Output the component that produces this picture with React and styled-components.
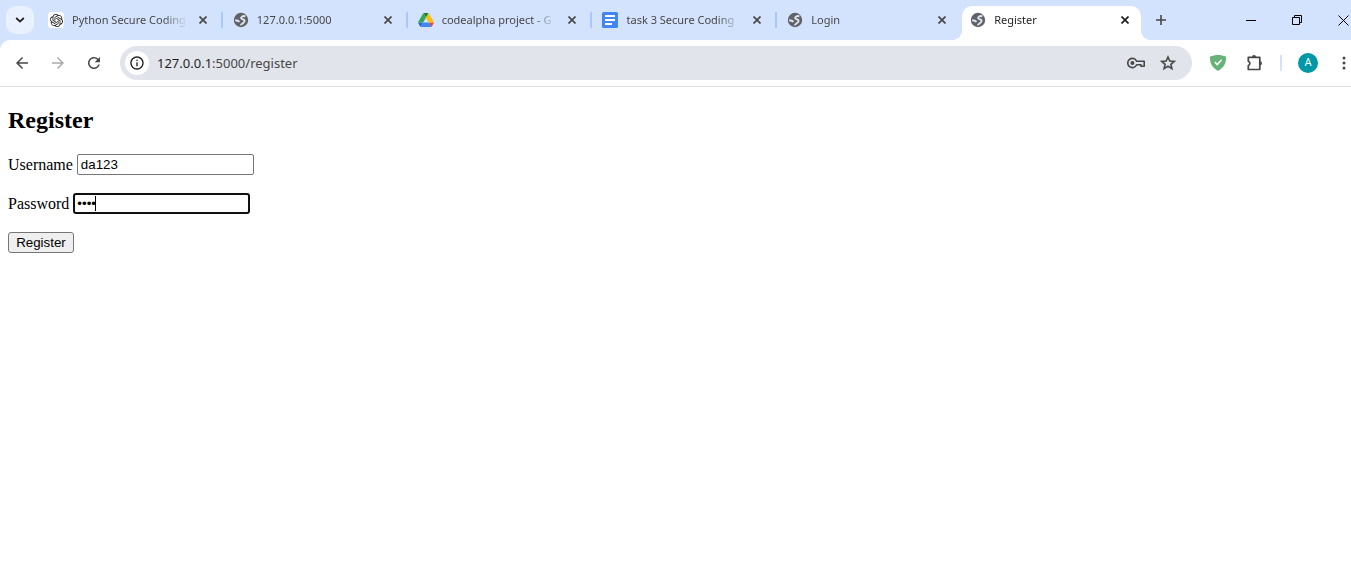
import React from "react";
import styled, { createGlobalStyle, css } from "styled-components";
import {
  MdArrowBack,
  MdArrowForward,
  MdRefresh,
  MdInfoOutline,
} from "react-icons/md";
import { SiOpenai } from "react-icons/si";

const GlobalStyle = createGlobalStyle`
  *, *::before, *::after { box-sizing: border-box; }
  body { margin: 0; background: #fff; overflow-x: hidden; }
`;

const uiFont = `"Noto Sans", "Open Sans", sans-serif`;

const Browser = styled.div`
  min-height: 100vh;
  display: flex;
  flex-direction: column;
`;

const PlainButton = styled.button`
  display: flex;
  align-items: center;
  justify-content: center;
  flex: none;
  padding: 0;
  border: 0;
  background: none;
  color: #474747;

  svg { flex: none; }
`;

const TabStrip = styled.header`
  display: flex;
  align-items: flex-end;
  height: 40px;
  padding-left: 6px;
  background: #d3e2fd;
`;

const TabSearch = styled(PlainButton)`
  align-self: center;
  width: 28px;
  height: 28px;
  margin-right: 4px;
  border-radius: 10px;
  background: #e9f1fe;
  color: #1f1f1f;
`;

const TabList = styled.div`
  display: flex;
  flex: 0 1 1110px;
  min-width: 0;
`;

const Tab = styled.div`
  position: relative;
  display: flex;
  flex: 1 1 0;
  min-width: 0;
  align-items: center;
  height: 34px;
  padding: 0 12px 6px 10px;
  color: #474747;

  ${(p) =>
    p.$divided &&
    css`
      &::after {
        content: "";
        position: absolute;
        right: 0;
        top: 6px;
        width: 2px;
        height: 16px;
        background: #a8c7fa;
      }
    `}

  ${(p) =>
    p.$active &&
    css`
      margin-right: 7px;
      padding: 0 8px 6px;
      border-radius: 10px 10px 0 0;
      background: #fff;
      color: #1f1f1f;

      &::before,
      &::after {
        content: "";
        position: absolute;
        bottom: 0;
        width: 10px;
        height: 10px;
      }
      &::before {
        right: 100%;
        background: radial-gradient(circle at 0 0, transparent 10px, #fff 10px);
      }
      &::after {
        left: 100%;
        background: radial-gradient(circle at 100% 0, transparent 10px, #fff 10px);
      }
    `}
`;

const Favicon = styled.span`
  display: flex;
  align-items: center;
  justify-content: center;
  flex: none;
  width: 16px;
  height: 16px;
  margin-right: 8px;
  border-radius: 3px;
  color: #5f6368;
  background: ${(p) => (p.$plate ? "#fff" : "none")};
`;

const TabTitle = styled.span`
  flex: 1;
  min-width: 0;
  overflow: hidden;
  white-space: nowrap;
  font: 11px/16px ${uiFont};
  mask-image: linear-gradient(to right, #000 calc(100% - 24px), transparent);
`;

const TabClose = styled(PlainButton)`
  width: 16px;
  height: 16px;
  margin-left: 8px;
  color: inherit;
`;

const NewTab = styled(PlainButton)`
  align-self: center;
  width: 26px;
  height: 28px;
`;

const WindowControls = styled.div`
  display: flex;
  align-self: stretch;
  margin-left: auto;
`;

const WindowButton = styled(PlainButton)`
  width: ${(p) => (p.$edge ? 31 : 46)}px;
  padding-right: ${(p) => (p.$edge ? 2 : 0)}px;
  justify-content: ${(p) => (p.$edge ? "flex-end" : "center")};
  color: #000;
`;

const Toolbar = styled.nav`
  display: flex;
  align-items: center;
  height: 47px;
  padding-left: 8px;
  border-bottom: 1px solid #dfe1e3;
  background: linear-gradient(#d3e2fd, #d3e2fd) 0 0 / 10px 10px no-repeat;
  position: relative;
  isolation: isolate;

  &::before {
    content: "";
    position: absolute;
    inset: 0;
    z-index: -1;
    border-top-left-radius: 10px;
    background: #fff;
  }
`;

const ToolButton = styled(PlainButton)`
  width: 28px;
  height: 28px;
  margin-right: 8px;
  font-size: 18px;
  color: ${(p) => (p.disabled ? "#ababab" : "#474747")};
`;

const AddressBar = styled.div`
  display: flex;
  align-items: center;
  flex: 1;
  min-width: 0;
  height: 34px;
  margin: 0 12px 0 4px;
  padding: 0 10px 0 5px;
  border-radius: 17px;
  background: #e1e5eb;
`;

const SiteInfo = styled(PlainButton)`
  width: 24px;
  height: 24px;
  border-radius: 50%;
  background: #fff;
  font-size: 16px;
  color: #1f1f1f;
`;

const Url = styled.span`
  flex: 1;
  min-width: 0;
  margin-left: 8px;
  overflow: hidden;
  white-space: nowrap;
  font: 13px/20px ${uiFont};
  color: #474747;
`;

const Host = styled.span`
  color: #1f1f1f;
`;

const AddressAction = styled(PlainButton)`
  width: 28px;
  height: 28px;
  margin-left: 4px;
`;

const Extensions = styled.div`
  display: flex;
  align-items: center;
  gap: 9px;
`;

const ExtensionButton = styled(PlainButton)`
  width: 28px;
  height: 28px;
`;

const ToolDivider = styled.span`
  width: 2px;
  height: 16px;
  margin-left: 2px;
  background: #d3e2fd;
`;

const Avatar = styled.button`
  width: 20px;
  height: 20px;
  margin-left: 7px;
  padding: 0;
  border: 0;
  border-radius: 50%;
  background: #0097a7;
  color: #fff;
  font: 11px/20px Roboto, sans-serif;
  text-align: center;
`;

const MenuButton = styled(PlainButton)`
  width: 14px;
  height: 28px;
  margin-left: 10px;
`;

const Page = styled.main`
  flex: 1;
  padding: 20px 8px 8px;
  color: #000;
  font: 16px/18px "Liberation Serif", "Times New Roman", serif;
`;

const Heading = styled.h2`
  margin: 0 0 20px;
  font-size: 24px;
  line-height: 27px;
`;

const Form = styled.form`
  display: flex;
  flex-direction: column;
  align-items: flex-start;
  gap: 18px;
`;

const Field = styled.div`
  display: flex;
  align-items: center;
  gap: 4px;
`;

const FieldBox = styled.span`
  position: relative;
  display: flex;
`;

const TextInput = styled.input`
  width: 177px;
  height: 21px;
  padding: 1px 3px;
  border: 1px solid #767676;
  border-radius: 2px;
  outline: 0;
  background: #fff;
  color: #000;
  font-family: "Liberation Sans", Arial, sans-serif;

  ${(p) =>
    p.$focused &&
    css`
      padding: 0 2px;
      border: 2px solid #101010;
      border-radius: 3px;
    `}
`;

const Caret = styled.span`
  position: absolute;
  left: 22px;
  top: 3px;
  width: 1px;
  height: 15px;
  background: #000;
`;

const SubmitButton = styled.button`
  width: 66px;
  height: 21px;
  padding: 0;
  border: 1px solid #767676;
  border-radius: 3px;
  background: #efefef;
  color: #000;
  font-family: "Liberation Sans", Arial, sans-serif;
`;

const CloseIcon = () => (
  <svg width="8" height="8" viewBox="0 0 8 8" stroke="currentColor" strokeWidth="1.7">
    <path d="M.5.5l7 7M7.5.5l-7 7" />
  </svg>
);

const GlobeIcon = () => (
  <svg width="16" height="16" viewBox="0 0 16 16">
    <circle cx="8" cy="8" r="7.2" fill="currentColor" />
    <path
      d="M12.4 4.300C10.800 3.600 9.300 4 8.400 5.200c-.6.900-.1 1.700.9 1.900 1.300.2 2.300.8 2.300 2 0 1.200-1.100 1.500-1.800 2.100-.7.700-1.100 1.600-2.500 1.700M2.200 8.200c1.500.1 3.100.3 4.300 1.600"
      fill="none"
      stroke="#dfe5ef"
      strokeWidth="1.9"
    />
  </svg>
);

const DriveIcon = () => (
  <svg width="16" height="14" viewBox="0 0 87.3 78">
    <path d="m6.6 66.85 3.85 6.65c.8 1.4 1.95 2.5 3.3 3.3l13.75-23.8h-27.5c0 1.55.4 3.1 1.2 4.5z" fill="#1967d2" />
    <path d="m43.65 25-13.75-23.8c-1.35.8-2.5 1.9-3.3 3.3l-25.4 44a9.06 9.06 0 0 0 -1.2 4.5h27.5z" fill="#34a853" />
    <path d="m73.55 76.8c1.35-.8 2.5-1.9 3.3-3.3l1.6-2.75 7.65-13.25c.8-1.4 1.2-2.95 1.2-4.5h-27.5l5.85 11.5z" fill="#ea4335" />
    <path d="m43.65 25 13.75-23.8c-1.35-.8-2.9-1.2-4.5-1.2h-18.5c-1.6 0-3.15.45-4.5 1.2z" fill="#188038" />
    <path d="m59.8 53h-32.3l-13.75 23.8c1.35.8 2.9 1.2 4.5 1.2h50.8c1.6 0 3.15-.45 4.5-1.2z" fill="#4285f4" />
    <path d="m73.4 26.5-12.7-22c-.8-1.4-1.95-2.5-3.3-3.3l-13.75 23.8 16.15 28h27.45c0-1.55-.4-3.1-1.2-4.5z" fill="#fbbc04" />
  </svg>
);

const DocsIcon = () => (
  <svg width="16" height="16" viewBox="0 0 16 16">
    <rect width="16" height="16" rx="1.5" fill="#4285f4" />
    <path d="M3 4h10M3 8h10M3 12h7" stroke="#fff" strokeWidth="2" />
  </svg>
);

const KeyIcon = () => (
  <svg width="18" height="12" viewBox="0 0 18 12" fill="none" stroke="currentColor" strokeWidth="1.6">
    <path d="M9.6 4.2h7.6v5h-3.200v-1.400h-4.400A4.6 4.6 0 1 1 9.6 4.2z" strokeLinejoin="round" />
    <circle cx="5.4" cy="6" r="2" fill="currentColor" stroke="none" />
  </svg>
);

const StarIcon = () => (
  <svg width="16" height="16" viewBox="0 0 16 16" fill="none" stroke="currentColor" strokeWidth="1.6">
    <path d="M8 2l1.800 4 4.400.4-3.300 2.900 1 4.300L8 11.300l-3.900 2.300 1-4.300-3.300-2.900 4.400-.4z" />
  </svg>
);

const ShieldIcon = () => (
  <svg width="16" height="16" viewBox="0 0 16 16">
    <path d="M8 0C5.4 0 2.6.5 0 1.6c0 5.2.3 10 8 14.4 7.700-4.400 8-9.200 8-14.400C13.400.5 10.600 0 8 0z" fill="#67b279" />
    <path d="M4.800 7l2.400 2.600L11.600 4.800" fill="none" stroke="#fff" strokeWidth="1.500" />
  </svg>
);

const PuzzleIcon = () => (
  <svg width="18" height="18" viewBox="0 0 18 18">
    <path
      d="M2.300 3.300h11.500v12.200H2.300v-4a2.200 2.200 0 0 0 0-4.200z"
      fill="none"
      stroke="currentColor"
      strokeWidth="1.700"
      strokeLinejoin="round"
    />
    <path d="M6 3.100a2 2 0 0 1 4 0zM14 7.200a2 2 0 0 1 0 4z" fill="currentColor" />
  </svg>
);

const tabs = [
  { title: "Python Secure Coding", icon: <SiOpenai size={13} color="#222" />, plate: true },
  { title: "127.0.0.1:5000", icon: <GlobeIcon /> },
  { title: "codealpha project - G", icon: <DriveIcon /> },
  { title: "task 3 Secure Coding", icon: <DocsIcon /> },
  { title: "Login", icon: <GlobeIcon /> },
  { title: "Register", icon: <GlobeIcon />, active: true },
];

export default function App() {
  return (
    <Browser>
      <GlobalStyle />
      <TabStrip>
        <TabSearch aria-label="Search tabs">
          <svg width="10" height="6" viewBox="0 0 10 6" fill="none" stroke="currentColor" strokeWidth="1.800">
            <path d="M1.200 1L5 4.600 8.800 1" />
          </svg>
        </TabSearch>
        <TabList>
          {tabs.map((tab, i) => (
            <Tab key={tab.title} $active={tab.active} $divided={i < 4}>
              <Favicon $plate={tab.plate}>{tab.icon}</Favicon>
              <TabTitle>{tab.title}</TabTitle>
              <TabClose aria-label={`Close ${tab.title}`}>
                <CloseIcon />
              </TabClose>
            </Tab>
          ))}
        </TabList>
        <NewTab aria-label="New tab">
          <svg width="12" height="12" viewBox="0 0 12 12" stroke="currentColor" strokeWidth="1.600">
            <path d="M6 1v10M1 6h10" />
          </svg>
        </NewTab>
        <WindowControls>
          <WindowButton aria-label="Minimize">
            <svg width="10" height="10" viewBox="0 0 10 10" stroke="currentColor">
              <path d="M0 5.500h10" />
            </svg>
          </WindowButton>
          <WindowButton aria-label="Restore">
            <svg width="10" height="10" viewBox="0 0 10 10" fill="none" stroke="currentColor">
              <path d="M.5 2.500h7v7h-7zM2.500 2.500v-2h7v7h-2" />
            </svg>
          </WindowButton>
          <WindowButton aria-label="Close" $edge>
            <svg width="11" height="11" viewBox="0 0 11 11" stroke="currentColor">
              <path d="M.5.5l10 10M10.500.5l-10 10" />
            </svg>
          </WindowButton>
        </WindowControls>
      </TabStrip>

      <Toolbar>
        <ToolButton aria-label="Back">
          <MdArrowBack />
        </ToolButton>
        <ToolButton aria-label="Forward" disabled>
          <MdArrowForward />
        </ToolButton>
        <ToolButton aria-label="Reload">
          <MdRefresh />
        </ToolButton>
        <AddressBar>
          <SiteInfo aria-label="Site information">
            <MdInfoOutline />
          </SiteInfo>
          <Url>
            <Host>127.0.0.1</Host>:5000/register
          </Url>
          <AddressAction aria-label="Passwords">
            <KeyIcon />
          </AddressAction>
          <AddressAction aria-label="Bookmark">
            <StarIcon />
          </AddressAction>
        </AddressBar>
        <Extensions>
          <ExtensionButton aria-label="Ad blocker">
            <ShieldIcon />
          </ExtensionButton>
          <ExtensionButton aria-label="Extensions">
            <PuzzleIcon />
          </ExtensionButton>
          <ToolDivider />
          <Avatar aria-label="Profile">A</Avatar>
          <MenuButton aria-label="Menu">
            <svg width="4" height="14" viewBox="0 0 4 14" fill="currentColor">
              <circle cx="2" cy="2" r="1.500" />
              <circle cx="2" cy="7" r="1.500" />
              <circle cx="2" cy="12" r="1.500" />
            </svg>
          </MenuButton>
        </Extensions>
      </Toolbar>

      <Page>
        <Heading>Register</Heading>
        <Form onSubmit={(e) => e.preventDefault()}>
          <Field>
            <label htmlFor="username">Username</label>
            <TextInput id="username" type="text" defaultValue="da123" />
          </Field>
          <Field>
            <label htmlFor="password">Password</label>
            <FieldBox>
              <TextInput id="password" type="password" defaultValue="1234" $focused />
              <Caret />
            </FieldBox>
          </Field>
          <SubmitButton type="submit">Register</SubmitButton>
        </Form>
      </Page>
    </Browser>
  );
}
